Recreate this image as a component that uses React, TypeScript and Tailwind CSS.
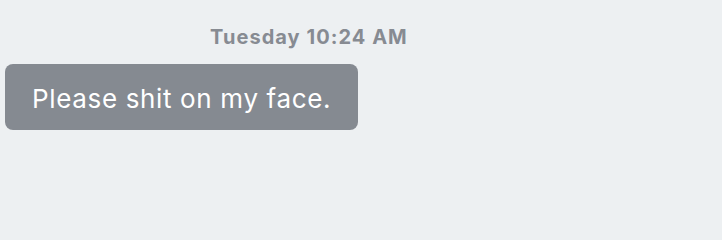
export default function App() {
  return (
    <div className="w-[722px] h-[240px] bg-[#edf0f2] overflow-hidden" style={{ fontFamily: 'Inter, sans-serif' }}>
      <div className="pt-[23px] pl-[210px] h-[64px]">
        <div className="text-[20px] leading-[28px] font-bold tracking-[1.05px] text-[#878b92] whitespace-nowrap">Tuesday 10:24 AM</div>
      </div>
      <div className="pl-[5px]">
        <div className="inline-flex items-center h-[66px] w-[353px] rounded-[8px] bg-[#858a91] pl-[27px] pt-[2px]">
          <span className="text-[26px] tracking-[0.65px] text-white whitespace-nowrap">Please shit on my face.</span>
        </div>
      </div>
    </div>
  );
}
